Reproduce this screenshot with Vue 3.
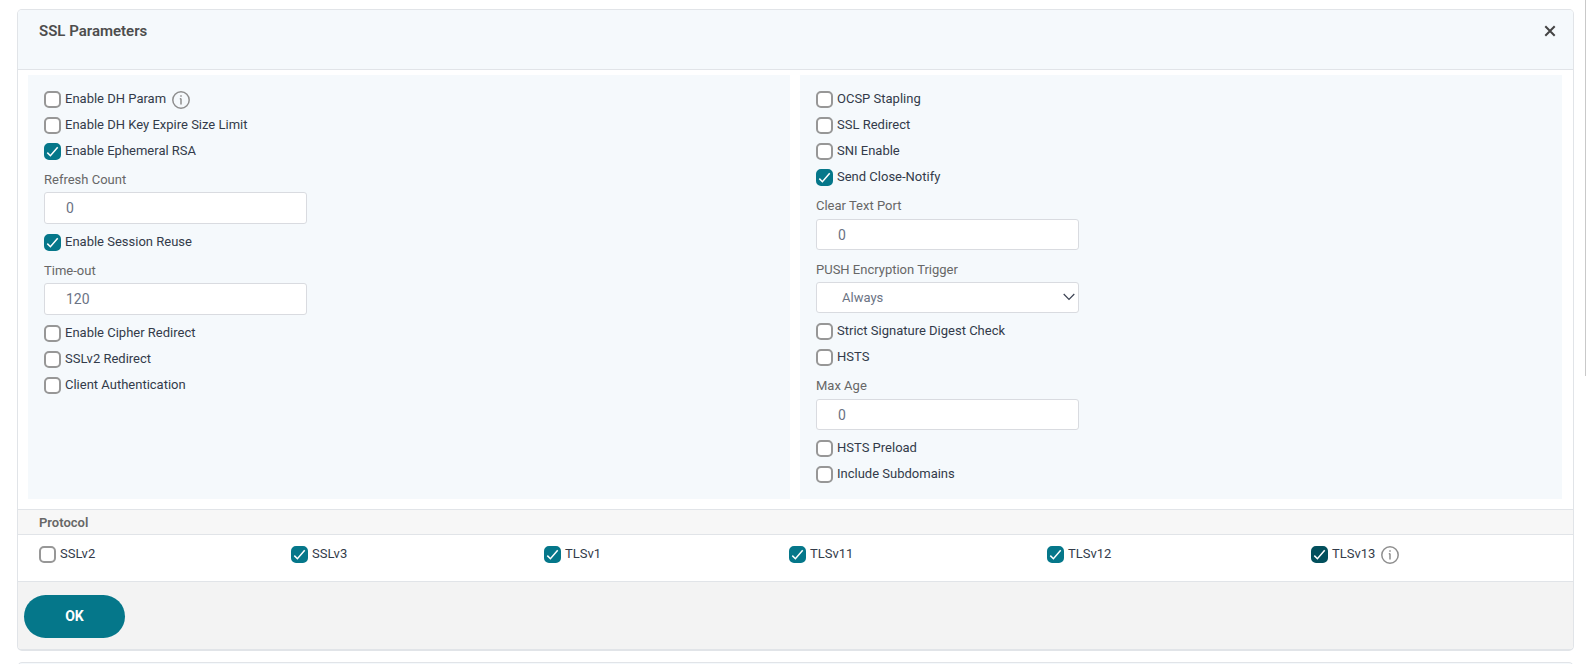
<script setup>
import { reactive } from 'vue'

const columns = reactive([
  [
    { id: 'dh', label: 'Enable DH Param', value: false, info: true },
    { id: 'dhkey', label: 'Enable DH Key Expire Size Limit', value: false },
    { id: 'ersa', label: 'Enable Ephemeral RSA', value: true },
    { id: 'ersacount', type: 'text', label: 'Refresh Count', value: '0' },
    { id: 'reuse', label: 'Enable Session Reuse', value: true },
    { id: 'timeout', type: 'text', label: 'Time-out', value: '120' },
    { id: 'cipher', label: 'Enable Cipher Redirect', value: false },
    { id: 'v2redirect', label: 'SSLv2 Redirect', value: false },
    { id: 'clientauth', label: 'Client Authentication', value: false }
  ],
  [
    { id: 'ocsp', label: 'OCSP Stapling', value: false },
    { id: 'redirect', label: 'SSL Redirect', value: false },
    { id: 'sni', label: 'SNI Enable', value: false },
    { id: 'closenotify', label: 'Send Close-Notify', value: true },
    { id: 'cleartext', type: 'text', label: 'Clear Text Port', value: '0' },
    { id: 'push', type: 'select', label: 'PUSH Encryption Trigger', value: 'Always', options: ['Always', 'Ignore', 'Merge', 'Timer'] },
    { id: 'strict', label: 'Strict Signature Digest Check', value: false },
    { id: 'hsts', label: 'HSTS', value: false },
    { id: 'maxage', type: 'text', label: 'Max Age', value: '0' },
    { id: 'preload', label: 'HSTS Preload', value: false },
    { id: 'subdomains', label: 'Include Subdomains', value: false }
  ]
])

const protocols = reactive([
  { id: 'sslv2', label: 'SSLv2', value: false },
  { id: 'sslv3', label: 'SSLv3', value: true },
  { id: 'tlsv1', label: 'TLSv1', value: true },
  { id: 'tlsv11', label: 'TLSv11', value: true },
  { id: 'tlsv12', label: 'TLSv12', value: true },
  { id: 'tlsv13', label: 'TLSv13', value: true, info: true, dark: true }
])
</script>

<template>
  <main class="page">
    <section class="panel">
      <header class="head">
        <h1>SSL Parameters</h1>
        <button class="close" type="button" aria-label="Close">
          <svg width="12" height="12" viewBox="0 0 12 12"><path d="M1.3 1.3 10.7 10.7M10.7 1.3 1.3 10.7" stroke="#444" stroke-width="2" /></svg>
        </button>
      </header>

      <div class="columns">
        <div v-for="(items, c) in columns" :key="c" class="column" :class="{ compact: c === 1 }">
          <template v-for="item in items" :key="item.id">
            <div v-if="item.type" class="field" :class="item.type">
              <label :for="item.id">{{ item.label }}</label>
              <input v-if="item.type === 'text'" :id="item.id" v-model="item.value" class="control" type="text" />
              <div v-else class="picker">
                <select :id="item.id" v-model="item.value" class="control">
                  <option v-for="o in item.options" :key="o">{{ o }}</option>
                </select>
                <svg class="chevron" width="12" height="8" viewBox="0 0 12 8"><path d="M.7 1 6 6.4 11.3 1" fill="none" stroke="#3b4252" stroke-width="1.2" /></svg>
              </div>
            </div>
            <div v-else class="check">
              <span class="box">
                <input :id="item.id" v-model="item.value" type="checkbox" />
                <svg class="tick" viewBox="0 0 17 17"><path d="M3.3 9.6 6.4 12.7 13.7 4.2" fill="none" stroke="#fff" stroke-width="1.5" /></svg>
              </span>
              <label :for="item.id">{{ item.label }}</label>
              <svg v-if="item.info" class="info" viewBox="0 0 18 18"><circle cx="9" cy="9" r="8.2" /><path d="M9 7.4V13.6M7.8 7.8H9M9 4.2V5.8" /></svg>
            </div>
          </template>
        </div>
      </div>

      <h2>Protocol</h2>
      <div class="protocols">
        <div v-for="item in protocols" :key="item.id" class="check">
          <span class="box" :class="{ dark: item.dark }">
            <input :id="item.id" v-model="item.value" type="checkbox" />
            <svg class="tick" viewBox="0 0 17 17"><path d="M3.3 9.6 6.4 12.7 13.7 4.2" fill="none" stroke="#fff" stroke-width="1.5" /></svg>
          </span>
          <label :for="item.id">{{ item.label }}</label>
          <svg v-if="item.info" class="info" viewBox="0 0 18 18"><circle cx="9" cy="9" r="8.2" /><path d="M9 7.4V13.6M7.8 7.8H9M9 4.2V5.8" /></svg>
        </div>
      </div>

      <footer class="foot">
        <button class="ok" type="button">OK</button>
      </footer>
    </section>
    <section class="next"></section>
    <div class="scroll-thumb"></div>
  </main>
</template>

<style>
body {
  background: #fff;
  overflow: hidden;
}
</style>

<style scoped>
.page {
  position: relative;
  padding: 9px 12px 0 17px;
  font-family: Roboto, "Liberation Sans", sans-serif;
  font-size: 13px;
  color: #333b4a;
}
.page *,
.page {
  box-sizing: border-box;
}
.panel {
  border: 1px solid #e1e4e8;
  border-bottom-width: 2px;
  border-radius: 5px;
  overflow: hidden;
}
.head {
  display: flex;
  justify-content: space-between;
  align-items: flex-start;
  height: 60px;
  padding: 11px 17px 0 21px;
  background: #f5f9fc;
  border-bottom: 1px solid #e1e4e8;
}
h1 {
  margin: 0;
  font-size: 15px;
  line-height: 20px;
  font-weight: 600;
  color: #4d4d4d;
}
.close {
  display: flex;
  padding: 4px 0 0;
  border: 0;
  background: none;
}
.columns {
  display: grid;
  grid-template-columns: 1fr 1fr;
  gap: 10px;
  padding: 5px 11px 10px 10px;
}
.column {
  padding: 12px 16px 11px;
  background: #f5f9fc;
}
.check {
  display: flex;
  align-items: flex-start;
  height: 26px;
  padding-top: 4px;
}
.check label {
  line-height: 16px;
}
.box {
  position: relative;
  display: flex;
  width: 17px;
  height: 17px;
  margin-right: 4px;
}
.box input {
  appearance: none;
  width: 17px;
  height: 17px;
  margin: 0;
  background: #fff;
  border: 2px solid #979797;
  border-radius: 5px;
}
.box input:checked {
  background: #05778a;
  border-color: #05778a;
}
.box.dark input:checked {
  background: #024f5c;
  border-color: #024f5c;
}
.tick {
  display: none;
  position: absolute;
  inset: 0;
  pointer-events: none;
}
input:checked + .tick {
  display: block;
}
.info {
  width: 18px;
  height: 18px;
  margin-left: 6px;
  fill: none;
  stroke: #8f8f8f;
  stroke-width: 1.5;
}
.field {
  padding-bottom: 6px;
}
.field label {
  display: block;
  padding-top: 5px;
  height: 27px;
  line-height: 20px;
  color: #676767;
}
.compact .text label {
  height: 28px;
}
.compact .select label {
  height: 26px;
  padding-top: 4px;
}
.control {
  display: block;
  width: 263px;
  height: 32px;
  padding: 0 21px;
  background: #fff;
  border: 1px solid #d9dbe0;
  border-radius: 3px;
  font: inherit;
  font-size: 14px;
  color: #6b7384;
}
.compact .control {
  height: 31px;
}
.picker {
  position: relative;
  width: 263px;
}
select.control {
  appearance: none;
  padding: 0 25px;
  font-size: 13px;
}
.chevron {
  position: absolute;
  right: 4px;
  top: 11px;
  pointer-events: none;
}
h2 {
  margin: 0;
  padding: 1px 21px 0;
  border: solid #e1e4e8;
  border-width: 1px 0;
  background: #f7f7f7;
  font-size: 13px;
  line-height: 23px;
  font-weight: 600;
  color: #676767;
}
.protocols {
  display: grid;
  grid-template-columns: 252fr 253fr 245fr 258fr 264fr 262fr;
  padding: 7px 0 13px 21px;
}
.foot {
  display: flex;
  padding: 13px 6px 11px;
  border-top: 1px solid #e1e4e8;
  background: #f3f3f3;
}
.ok {
  width: 101px;
  height: 43px;
  padding-bottom: 3px;
  border: 0;
  border-radius: 22px;
  background: #05778a;
  color: #fff;
  font: inherit;
  font-size: 14px;
  font-weight: 700;
}
.next {
  height: 10px;
  margin-top: 11px;
  border: 1px solid #e1e4e8;
  border-radius: 5px 5px 0 0;
  background: #f5f9fc;
}
.scroll-thumb {
  position: absolute;
  top: 0;
  right: 0;
  width: 1px;
  height: 376px;
  background: #c9c9c9;
}
</style>
